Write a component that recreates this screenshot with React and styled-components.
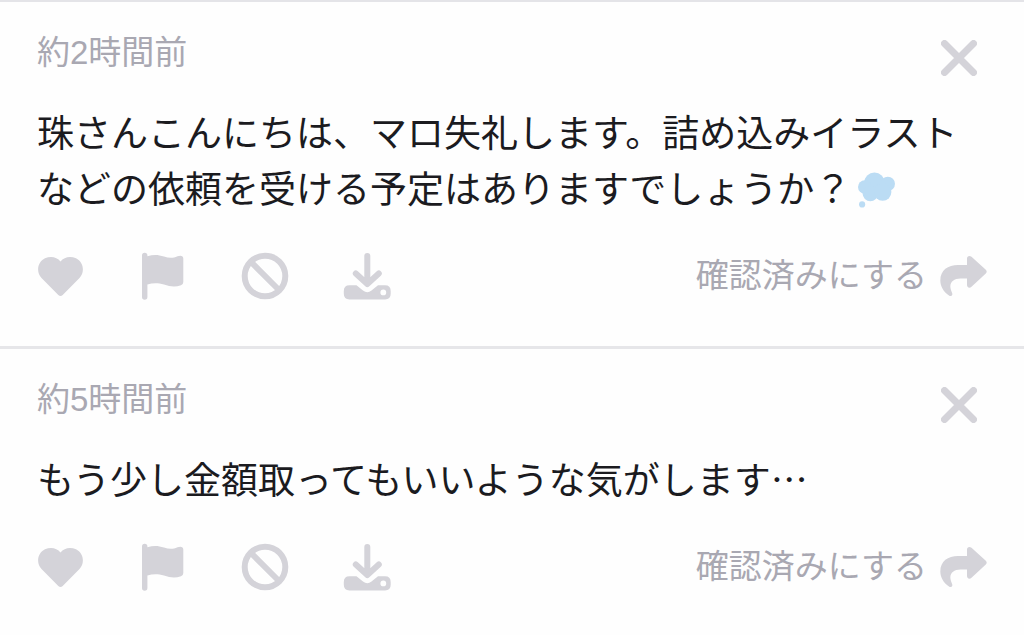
import React from "react";
import styled, { createGlobalStyle } from "styled-components";

const messages = [
  {
    id: 1,
    time: "約2時間前",
    text: "珠さんこんにちは、マロ失礼します。詰め込みイラストなどの依頼を受ける予定はありますでしょうか？",
    cloud: true,
  },
  {
    id: 2,
    time: "約5時間前",
    text: "もう少し金額取ってもいいような気がします…",
  },
];

const HeartIcon = () => (
  <svg viewBox='0 0 48 48' aria-hidden='true'>
    <path d='M23.500 9.500C20 4.800 13.500 3.600 8 6.300C.5 10-1.200 20 4.500 26L21.300 43Q23.500 45.200 25.700 43L42.500 26C48.200 20 46.500 10 39 6.300C33.500 3.600 27 4.800 23.500 9.500Z' />
  </svg>
);

const FlagIcon = () => (
  <svg viewBox='0 0 48 48' aria-hidden='true'>
    <path d='M3 3.500A2.700 2.700 0 0 1 8.400 3.500V4.300C14 2.400 19 2.400 25 4.500C30 6.200 34 6.300 38.500 4.300C41.500 3 44.300 3.500 44.300 6.500V30Q44.300 32.500 42 33.300C36 35.300 31 34.600 25 32.600C19 30.800 14 30.800 8.400 32.500V45A2.700 2.700 0 0 1 3 45Z' />
  </svg>
);

const BanIcon = () => (
  <svg viewBox='0 0 48 48' aria-hidden='true'>
    <circle className='line' cx='24' cy='24' r='20.300' />
    <path className='line' d='M10 10L38 38' />
  </svg>
);

const DownloadIcon = () => (
  <svg viewBox='0 0 48 48' aria-hidden='true'>
    <path className='arrow' d='M24.300 4V31M12.800 21.500L24.300 32L35.800 21.500' />
    <path
      fillRule='evenodd'
      d='M6.500 33.300H13.500L20 38.500Q24.300 41.800 28.500 38.500L35 33.300H42Q47.700 33.300 47.700 39V41.800Q47.700 47.500 42 47.500H6.500Q.8 47.500 .8 41.800V39Q.8 33.300 6.500 33.300ZM40.300 37.500A2.900 2.900 0 1 0 40.300 43.300A2.900 2.900 0 1 0 40.300 37.500Z'
    />
  </svg>
);

const ShareIcon = () => (
  <svg viewBox='0 0 48 48' aria-hidden='true'>
    <path d='M28 6.500C28 4 30.500 3 32.500 4.800L46.800 17.800Q48.600 19.600 46.800 21.400L32.500 34.800C30.500 36.500 28 35.500 28 33V26.500H21.500C14.500 26.500 10.500 30.500 11.500 36C11.900 38.500 12.800 40 13.200 41.300C13.900 43.500 11.800 44.800 10 43.500C4.500 40 1.300 34 1.300 28.500C1.300 18 9 13 19 13H28Z' />
  </svg>
);

const CloseIcon = () => (
  <svg viewBox='0 0 36 36' aria-hidden='true'>
    <path className='cross' d='M3.500 3.500L32.500 32.500M32.500 3.500L3.500 32.500' />
  </svg>
);

const Cloud = () => (
  <CloudIcon viewBox='0 0 36 36' role='img' aria-label='思考'>
    <circle cx='16' cy='10.500' r='10' />
    <circle cx='29' cy='11.500' r='7' />
    <circle cx='6.500' cy='14.500' r='6.500' />
    <circle cx='12' cy='21' r='7.500' />
    <circle cx='24' cy='19.500' r='8.500' />
    <circle cx='4' cy='31.500' r='3' />
  </CloudIcon>
);

const actions = [
  { label: "いいね", Icon: HeartIcon },
  { label: "通報", Icon: FlagIcon },
  { label: "ブロック", Icon: BanIcon },
  { label: "保存", Icon: DownloadIcon },
];

const Message = ({ time, text, cloud }) => {
  return (
    <MessageContainer>
      <Header>
        <time>{time}</time>
        <CloseButton type='button' aria-label='閉じる'>
          <CloseIcon />
        </CloseButton>
      </Header>
      <Body>
        {text}
        {cloud && <Cloud />}
      </Body>
      <Footer>
        <Actions>
          {actions.map(({ label, Icon }) => (
            <IconButton type='button' aria-label={label} key={label}>
              <Icon />
            </IconButton>
          ))}
        </Actions>
        <ConfirmButton type='button'>
          確認済みにする
          <ShareIcon />
        </ConfirmButton>
      </Footer>
    </MessageContainer>
  );
};

const App = () => {
  return (
    <>
      <GlobalStyle />
      <MessageList>
        {messages.map((message) => (
          <Message {...message} key={message.id} />
        ))}
      </MessageList>
    </>
  );
};

const GlobalStyle = createGlobalStyle`
  * {
    box-sizing: border-box;
  }
  body {
    margin: 0;
    background: #fefefe;
    font-family: "Liberation Sans", "Noto Sans CJK JP", sans-serif;
  }
  button {
    padding: 0;
    border: 0;
    background: none;
    font: inherit;
    cursor: pointer;
  }
  svg {
    fill: #d4d3d9;
  }
`;

const MessageList = styled.main`
  border-top: 2px solid #e4e4e8;
`;

const MessageContainer = styled.article`
  padding: 30px 37px 46px;
  border-bottom: 3px solid #e6e6e9;
  &:last-child {
    padding-bottom: 30px;
    border-bottom: 0;
  }
`;

const Header = styled.header`
  display: flex;
  align-items: flex-start;
  justify-content: space-between;
  time {
    font-size: 33px;
    font-weight: 400;
    line-height: 42px;
    color: #a9a8b2;
  }
`;

const CloseButton = styled.button`
  padding: 8px 10px;
  svg {
    display: block;
    width: 36px;
    height: 36px;
  }
  .cross {
    fill: none;
    stroke: #d4d3d9;
    stroke-width: 7;
    stroke-linecap: round;
  }
`;

const Body = styled.p`
  margin: 19px 0 37px;
  font-family: "Noto Sans CJK JP", sans-serif;
  font-size: 37px;
  line-height: 56px;
  color: #1b1b1f;
`;

const CloudIcon = styled.svg`
  width: 37px;
  height: 37px;
  margin-left: 7px;
  vertical-align: -6px;
  fill: #bbdcf4;
`;

const Footer = styled.footer`
  display: flex;
  align-items: center;
  justify-content: space-between;
`;

const Actions = styled.div`
  display: flex;
  gap: 54px;
`;

const IconButton = styled.button`
  svg {
    display: block;
    width: 48px;
    height: 48px;
  }
  .line,
  .arrow {
    fill: none;
    stroke: #d4d3d9;
    stroke-width: 6;
  }
  .arrow {
    stroke-linecap: round;
    stroke-linejoin: round;
  }
`;

const ConfirmButton = styled.button`
  display: flex;
  align-items: center;
  gap: 12px;
  font-size: 33px;
  font-weight: 400;
  line-height: 48px;
  color: #a9a8b2;
  svg {
    width: 48px;
    height: 48px;
  }
`;

export default App;
